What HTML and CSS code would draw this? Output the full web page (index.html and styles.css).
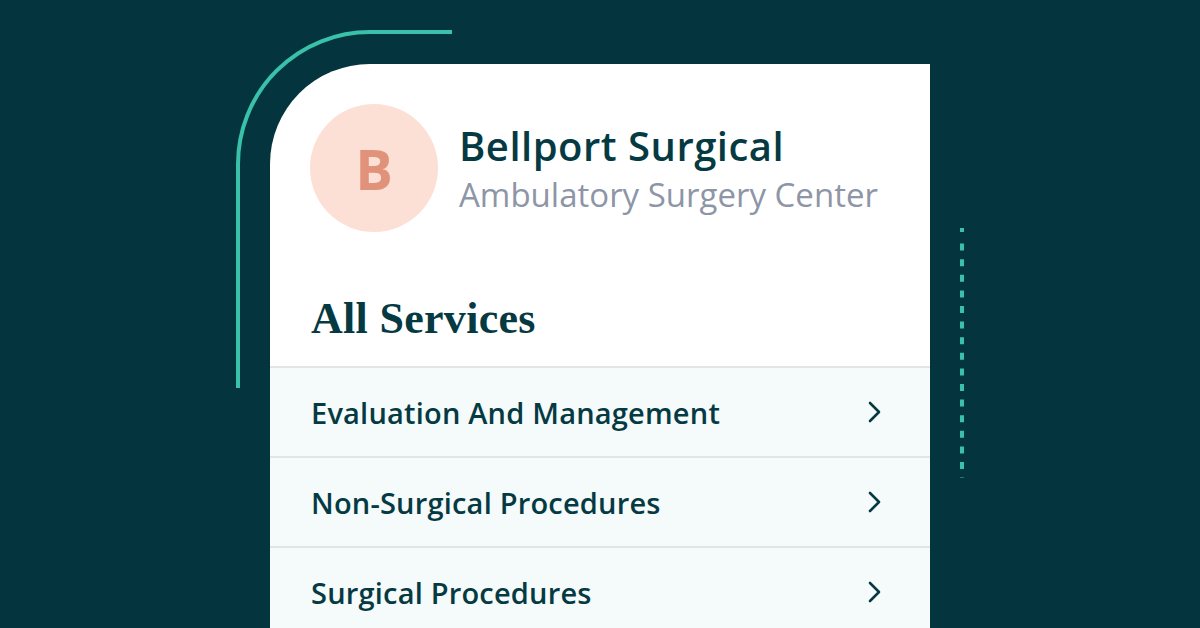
FILE: index.html
```html
<!DOCTYPE html>
<html>
<head>
<meta charset="utf-8">
<link rel="stylesheet" href="styles.css">
</head>
<body>
<div class="stage">
  <svg class="arc" width="460" height="400" viewBox="0 0 460 400">
    <path d="M452 32 H370 A132 132 0 0 0 238 164 V388" fill="none" stroke="#39c1a9" stroke-width="4"/>
  </svg>
  <svg class="dots" width="10" height="260" viewBox="0 0 10 260">
    <line x1="5" y1="2" x2="5" y2="252" stroke="#39c1a9" stroke-width="4" stroke-dasharray="4 11.6 7 8.6 7 8.6 7 8.6 7 8.6 7 8.6 7 8.6 7 8.6 7 8.6 7 8.6 7 8.6 7 8.6 7 8.6 7 8.6 7 8.6 7 8.6 7 8.6 7 8.6"/>
  </svg>
  <div class="card">
    <div class="header">
      <div class="avatar">B</div>
      <div class="names">
        <div class="title">Bellport Surgical</div>
        <div class="subtitle">Ambulatory Surgery Center</div>
      </div>
    </div>
    <h2 class="heading">All Services</h2>
    <ul class="list">
      <li class="row"><span>Evaluation And Management</span><svg class="chev" width="14" height="22" viewBox="0 0 14 22"><path d="M2 2 L11 11 L2 20" fill="none" stroke="#063a43" stroke-width="2.6" stroke-linecap="round" stroke-linejoin="round"/></svg></li>
      <li class="row"><span>Non-Surgical Procedures</span><svg class="chev" width="14" height="22" viewBox="0 0 14 22"><path d="M2 2 L11 11 L2 20" fill="none" stroke="#063a43" stroke-width="2.6" stroke-linecap="round" stroke-linejoin="round"/></svg></li>
      <li class="row"><span>Surgical Procedures</span><svg class="chev" width="14" height="22" viewBox="0 0 14 22"><path d="M2 2 L11 11 L2 20" fill="none" stroke="#063a43" stroke-width="2.6" stroke-linecap="round" stroke-linejoin="round"/></svg></li>
    </ul>
  </div>
</div>
</body>
</html>
```
FILE: styles.css
```css
* { box-sizing: border-box; }
html, body { margin: 0; padding: 0; }
body {
  width: 1200px;
  height: 628px;
  overflow: hidden;
  background: #04353f;
  font-family: "Open Sans", "Liberation Sans", sans-serif;
}
.stage {
  position: relative;
  width: 1200px;
  height: 628px;
  overflow: hidden;
  padding: 64px 0 0 270px;
}
.arc {
  position: absolute;
  left: 0;
  top: 0;
}
.dots {
  position: absolute;
  left: 957px;
  top: 226px;
}
.card {
  width: 660px;
  height: 564px;
  background: #ffffff;
  border-top-left-radius: 100px;
  overflow: hidden;
}
.header {
  display: flex;
  align-items: center;
  padding: 40px 0 0 40px;
  gap: 21px;
}
.avatar {
  width: 128px;
  height: 128px;
  border-radius: 50%;
  background: #fde0d5;
  color: #e0937a;
  font-size: 56px;
  font-weight: 700;
  display: flex;
  align-items: center;
  justify-content: center;
  flex: none;
}
.names { display: flex; flex-direction: column; padding-top: 4px; }
.title {
  color: #063a43;
  font-size: 40px;
  font-weight: 600;
  line-height: 50px;
  letter-spacing: 0.5px;
}
.subtitle {
  color: #8d95a6;
  font-size: 33px;
  font-weight: 400;
  line-height: 48px;
}
.heading {
  margin: 0;
  padding: 62px 0 22px 41px;
  font-family: "Liberation Serif", "DejaVu Serif", serif;
  font-weight: 700;
  font-size: 44px;
  line-height: 50px;
  color: #063a43;
  letter-spacing: 0.3px;
}
.list { list-style: none; margin: 0; padding: 0; }
.row {
  display: flex;
  align-items: center;
  justify-content: space-between;
  height: 90px;
  padding: 0 48px 0 41px;
  background: #f5fafb;
  border-top: 2px solid #e1e5e7;
  color: #063a43;
  font-size: 29px;
  font-weight: 600;
  letter-spacing: 0.2px;
}
.chev { flex: none; }
```
